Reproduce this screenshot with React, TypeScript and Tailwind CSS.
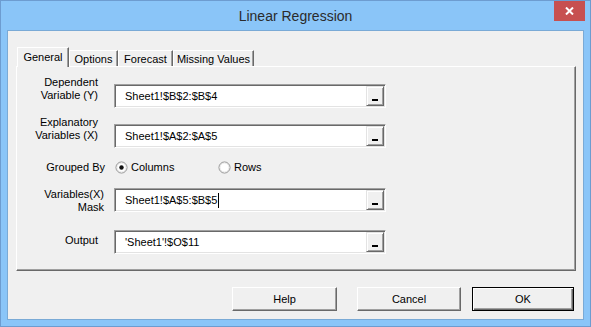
import React from "react";

const font = { fontFamily: '"Liberation Sans", Arial, sans-serif' };

function RefField({ value, cursor }: { value: string; cursor?: boolean }) {
  return (
    <div className="ml-[9px] flex h-[24px] w-[272px] border border-t-[#a0a0a0] border-l-[#a0a0a0] border-b-white border-r-white bg-white shadow-[inset_1px_1px_0_#696969,inset_-1px_-1px_0_#e3e3e3]">
      <div className="flex flex-1 items-center pl-[10px] pt-px text-[11px] text-black">
        <span>{value}</span>
        {cursor && <span className="ml-px inline-block h-[15px] w-px bg-black" />}
      </div>
      <div className="my-[1px] mr-[1px] flex h-[20px] w-[18px] items-end justify-center border border-t-[#e3e3e3] border-l-[#e3e3e3] border-b-[#696969] border-r-[#696969] bg-[#f0f0f0] pb-[4px] shadow-[inset_1px_1px_0_white,inset_-1px_-1px_0_#a0a0a0]">
        <span className="block h-[2px] w-[6px] bg-black" />
      </div>
    </div>
  );
}

function Radio({ checked }: { checked?: boolean }) {
  return (
    <svg width="13" height="13" viewBox="0 0 13 13">
      <circle cx="6.5" cy="6.5" r="5.5" fill="white" stroke="#8a8a8a" />
      <circle cx="6.5" cy="6.5" r="4.5" fill="none" stroke="#e8e8e8" />
      {checked && <circle cx="6.5" cy="6.5" r="2.2" fill="#111" />}
    </svg>
  );
}

function Btn({ label, w, def }: { label: string; w: string; def?: boolean }) {
  return (
    <div
      className={
        "flex h-[24px] items-center justify-center bg-[#f0f0f0] text-[11px] text-black " +
        w +
        (def
          ? " border border-black shadow-[inset_1px_1px_0_white,inset_-1px_-1px_0_#696969,inset_-2px_-2px_0_#a0a0a0]"
          : " border border-t-white border-l-white border-b-[#696969] border-r-[#696969] shadow-[inset_-1px_-1px_0_#a0a0a0]")
      }
    >
      {label}
    </div>
  );
}

export default function App() {
  return (
    <div
      className="flex h-[327px] w-[591px] flex-col border border-[#6d9cd0] bg-[#8ac5f8]"
      style={font}
    >
      <div className="relative flex h-[29px] items-center justify-center">
        <span className="pt-[1px] text-[14px] text-[#2b2b2b]">Linear Regression</span>
        <div className="absolute right-[5px] top-0 flex h-[20px] w-[31px] items-center justify-center bg-[#c75050]">
          <svg width="9" height="8" viewBox="0 0 9 8">
            <path d="M1 0.5 L8 7.5 M8 0.5 L1 7.5" stroke="white" strokeWidth="2" />
          </svg>
        </div>
      </div>
      <div className="mx-[6px] flex h-[290px] flex-col border border-[#7aaad6] bg-[#f0f0f0] text-[11px] text-black">
        {/* tabs */}
        <div className="ml-[9px] mt-[16px] flex h-[19px] items-end">
          <div className="relative z-10 -mb-px flex h-[20px] w-[52px] items-center justify-center border-l border-t border-r border-l-white border-t-white border-r-[#696969] bg-[#f0f0f0] pb-[1px] shadow-[inset_-1px_0_0_#a0a0a0]">
            General
          </div>
          <div className="flex h-[16px] w-[49px] items-center justify-center border-l border-t border-r border-l-white border-t-white border-r-[#696969] pt-[1px] shadow-[inset_-1px_0_0_#a0a0a0]">
            Options
          </div>
          <div className="flex h-[16px] w-[55px] items-center justify-center border-l border-t border-r border-l-white border-t-white border-r-[#696969] pt-[1px] shadow-[inset_-1px_0_0_#a0a0a0]">
            Forecast
          </div>
          <div className="flex h-[16px] w-[81px] items-center justify-center border-l border-t border-r border-l-white border-t-white border-r-[#696969] pt-[1px] shadow-[inset_-1px_0_0_#a0a0a0]">
            Missing Values
          </div>
        </div>
        {/* panel */}
        <div className="relative ml-[8px] flex h-[205px] w-[560px] flex-col border border-t-white border-l-white border-b-[#696969] border-r-[#696969] shadow-[inset_-1px_-1px_0_#a0a0a0]">
          <div className="mt-[17px] flex items-start">
            <div className="-mt-[8px] w-[88px] pr-[7px] text-right leading-[13px]">
              Dependent
              <br />
              Variable (Y)
            </div>
            <RefField value="Sheet1!$B$2:$B$4" />
          </div>
          <div className="mt-[16px] flex items-start">
            <div className="-mt-[8px] w-[88px] pr-[7px] text-right leading-[13px]">
              Explanatory
              <br />
              Variables (X)
            </div>
            <RefField value="Sheet1!$A$2:$A$5" />
          </div>
          <div className="mt-[11px] flex h-[16px] items-center">
            <div className="w-[88px] text-right">Grouped By</div>
            <div className="ml-[10px] flex w-[103px] items-center">
              <Radio checked />
              <span className="ml-[3px]">Columns</span>
            </div>
            <div className="flex items-center">
              <Radio />
              <span className="ml-[3px]">Rows</span>
            </div>
          </div>
          <div className="mt-[13px] flex items-start">
            <div className="w-[88px] pr-[1px] text-right leading-[13px]">
              Variables(X)
              <br />
              Mask
            </div>
            <RefField value="Sheet1!$A$5:$B$5" cursor />
          </div>
          <div className="mt-[16px] flex items-start">
            <div className="mt-[4px] w-[88px] pr-[7px] text-right leading-[13px]">Output</div>
            <RefField value="'Sheet1'!$O$11" />
          </div>
        </div>
        {/* buttons */}
        <div className="mt-[16px] flex justify-end pr-[9px]">
          <Btn label="Help" w="w-[105px]" />
          <div className="w-[20px]" />
          <Btn label="Cancel" w="w-[104px]" />
          <div className="w-[11px]" />
          <Btn label="OK" w="w-[102px]" def />
        </div>
      </div>
    </div>
  );
}
